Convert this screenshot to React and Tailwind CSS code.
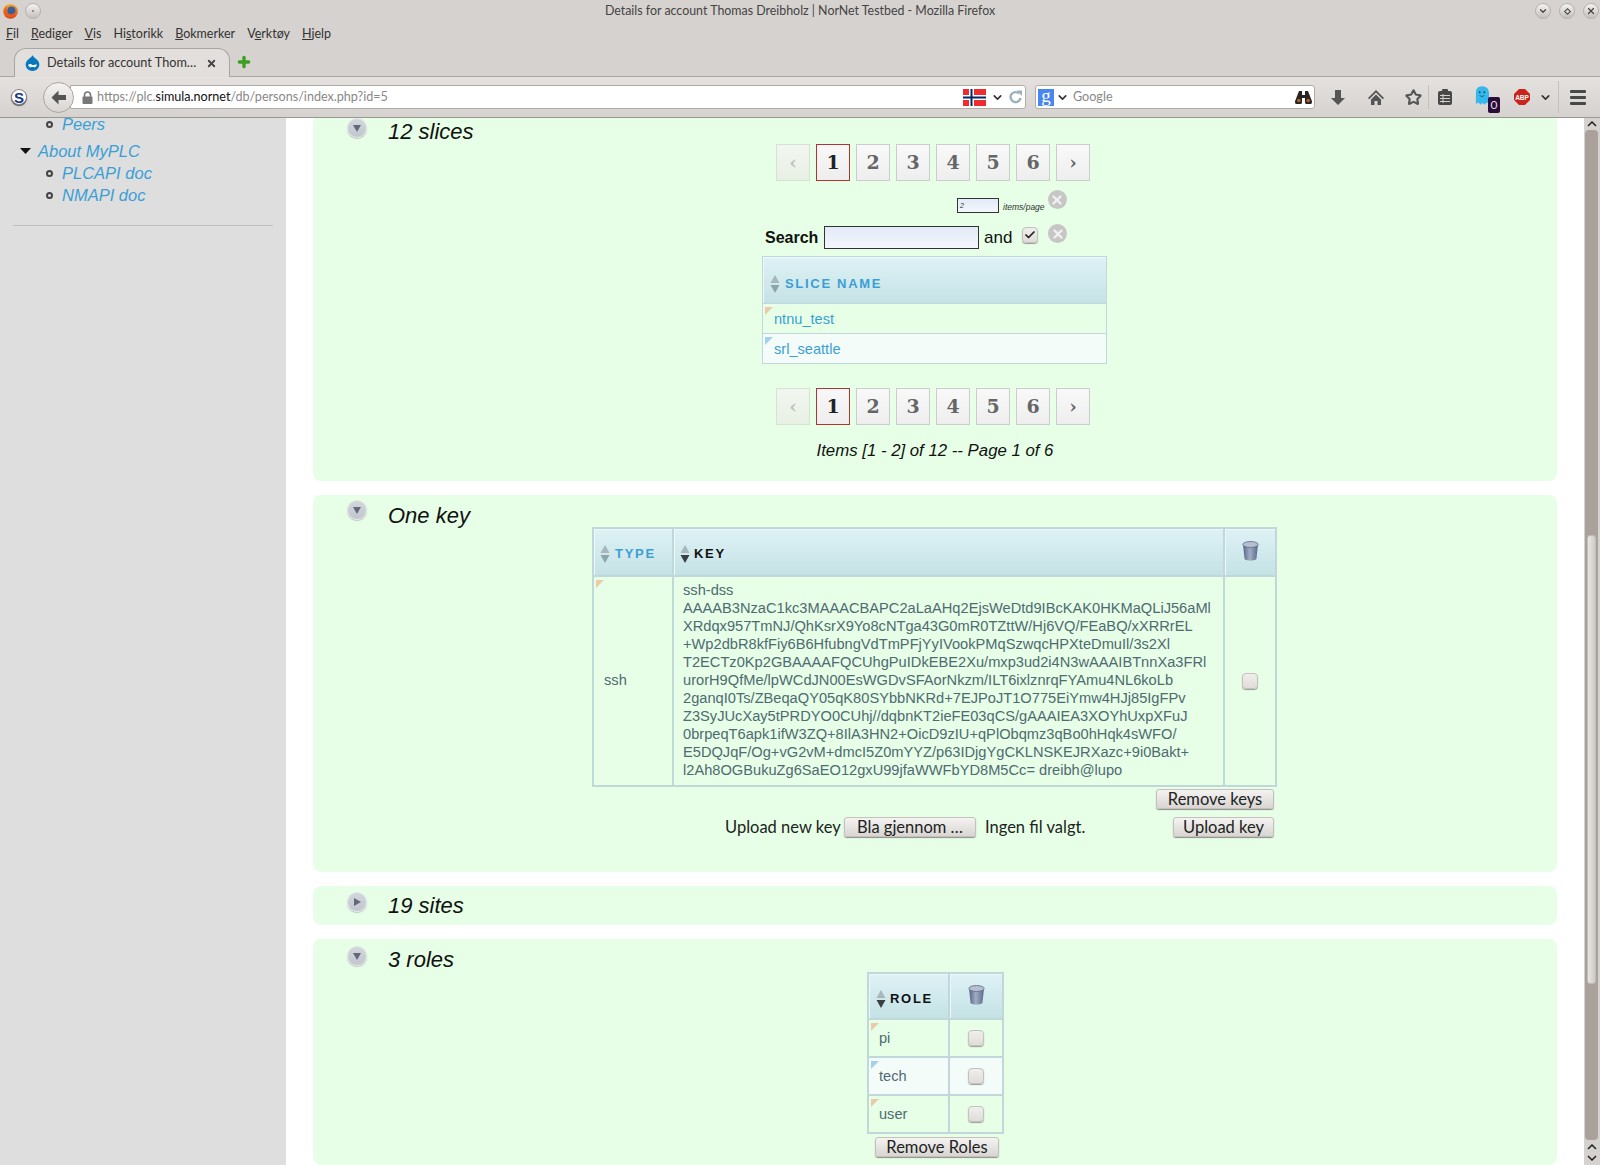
import React from 'react';
import { ChevronDown, Star, X, Plus, Check } from 'lucide-react';

const UI = "font-['Lato',sans-serif]";
const WEB = "font-['Liberation_Sans',sans-serif]";

function WinButton({ children }) {
  return (
    <span className="w-[16px] h-[16px] rounded-full bg-gradient-to-b from-[#f4f3f1] to-[#c4c0bc] border border-[#b5b1ad] flex items-center justify-center text-[#444]">
      {children}
    </span>
  );
}

function FirefoxLogo() {
  return (
    <svg width="15" height="15" viewBox="0 0 16 16">
      <defs>
        <linearGradient id="fx" x1="0" x2="0" y1="0" y2="1">
          <stop offset="0" stopColor="#f5a623" />
          <stop offset="1" stopColor="#d9421c" />
        </linearGradient>
      </defs>
      <circle cx="8" cy="8" r="7.800" fill="url(#fx)" />
      <circle cx="9" cy="7" r="4.300" fill="#35609c" />
      <path d="M4 2.500C2.800 6 4 10 7 11c2.500.8 5-.5 5.500-3 .8 3-1.500 6-5 6C4 14 1.500 11 1.800 7.500 2 5.500 3 3.500 4 2.500z" fill="#e8581f" />
    </svg>
  );
}

function DrupalDrop() {
  return (
    <svg width="15" height="16" viewBox="0 0 15 16">
      <path d="M7.500 0c.5 2 4 3.500 6 6.500 2 3.500.3 9.500-6 9.500S-.5 10 1.500 6.500C3.500 3.500 7 2 7.500 0z" fill="#0678be" />
      <path d="M3 10c2-1.500 3-.8 4.500 0s3-1.500 4.500 0c-1 2-2.500 3-4.500 3S4 12 3 10z" fill="#ffffff" />
      <path d="M5.500 12.500h4" stroke="#0678be" strokeWidth="1" />
    </svg>
  );
}

function LockIcon() {
  return (
    <svg width="11" height="13" viewBox="0 0 11 13">
      <path d="M2.500 6V4a3 3 0 0 1 6 0v2" fill="none" stroke="#777" strokeWidth="1.600" />
      <rect x="0.500" y="5.500" width="10" height="7.500" rx="1" fill="#777" />
    </svg>
  );
}

function BackArrow() {
  return (
    <svg width="15" height="15" viewBox="0 0 15 15">
      <path d="M7.500 0.500L0.500 7.500l7 7v-4.500H15V5H7.500z" fill="#555" />
    </svg>
  );
}

function ReloadIcon() {
  return (
    <svg width="13" height="14" viewBox="0 0 13 14">
      <path d="M10 3.500A5 5 0 1 0 11.500 8" fill="none" stroke="#9eb0bb" strokeWidth="2.400" />
      <path d="M7.500 0.500h5.500v5.500z" fill="#9eb0bb" />
    </svg>
  );
}

function NorwayFlag() {
  return (
    <svg width="23" height="17" viewBox="0 0 23 17">
      <rect width="23" height="17" fill="#ef2b2d" />
      <rect x="6" width="5" height="17" fill="#fff" />
      <rect y="6" width="23" height="5" fill="#fff" />
      <rect x="7.500" width="2" height="17" fill="#002868" />
      <rect y="7.500" width="23" height="2" fill="#002868" />
    </svg>
  );
}

function Binoculars() {
  return (
    <svg width="17" height="14" viewBox="0 0 17 14">
      <path d="M4 1h3v4h3V1h3l3.500 9a3.500 3.500 0 1 1-6.500 2V8H7v4a3.500 3.500 0 1 1-6.500-2z" fill="#2a2522" />
      <circle cx="3.800" cy="10.500" r="1.800" fill="#a8662e" />
      <circle cx="13.200" cy="10.500" r="1.800" fill="#a8662e" />
    </svg>
  );
}

function DownloadIcon() {
  return (
    <svg width="14" height="15" viewBox="0 0 14 15">
      <path d="M4 0h6v8h4l-7 7-7-7h4z" fill="#555" />
    </svg>
  );
}

function HomeIcon() {
  return (
    <svg width="16" height="15" viewBox="0 0 16 15">
      <path d="M8 0L0 8l1.200 1.200L8 2.500l6.800 6.700L16 8z" fill="#555" />
      <path d="M3 9.500l5-5 5 5V15H9.500v-4h-3v4H3z" fill="#555" />
    </svg>
  );
}

function ClipboardIcon() {
  return (
    <svg width="14" height="16" viewBox="0 0 14 16">
      <rect y="2" width="14" height="14" rx="2" fill="#484848" />
      <rect x="4" width="6" height="4" rx="1" fill="#484848" />
      <path d="M2 6.500h10M2 9.500h10M2 12.500h10M5 5v9" stroke="#d6d2cf" strokeWidth="1" />
    </svg>
  );
}

function AbpIcon() {
  return (
    <svg width="16" height="16" viewBox="0 0 16 16">
      <path d="M5 0h6l5 5v6l-5 5H5l-5-5V5z" fill="#c9231a" />
      <text x="8" y="10.500" textAnchor="middle" fontSize="6.500" fontWeight="700" fontFamily="Liberation Sans, sans-serif" fill="#fff">ABP</text>
    </svg>
  );
}

function Ghost() {
  return (
    <svg width="14" height="20" viewBox="0 0 15 21">
      <path d="M7.500 0C3 0 1 3 1 7v12l2.500-1.500L6 20l2-2 2.500 2 2-2.500L15 19V7c0-4-3-7-7.500-7z" fill="#35b8ec" />
      <circle cx="5" cy="6.500" r="1" fill="#104a66" />
      <circle cx="10" cy="6.500" r="1" fill="#104a66" />
      <path d="M5 10c1.500 1.200 3.500 1.200 5 0" fill="none" stroke="#104a66" strokeWidth=".8" />
    </svg>
  );
}

function TrashCan() {
  return (
    <svg width="17" height="20" viewBox="0 0 17 20">
      <defs>
        <linearGradient id="can" x1="0" x2="1" y1="0" y2="0">
          <stop offset="0" stopColor="#53648a" />
          <stop offset="0.45" stopColor="#a2adc2" />
          <stop offset="1" stopColor="#5a6a8e" />
        </linearGradient>
      </defs>
      <path d="M1 3.500l1.500 14c.1 1.500 3 2 6 2s5.900-.5 6-2l1.500-14z" fill="url(#can)" />
      <ellipse cx="8.500" cy="3.500" rx="7.700" ry="3" fill="#b7bfce" stroke="#5c6b8c" strokeWidth=".8" />
    </svg>
  );
}

function ToggleCircle({ dir = 'down' }) {
  return (
    <span className="w-[20px] h-[20px] rounded-full bg-gradient-to-b from-[#d3d7dd] to-[#c1c6cf] border border-[#e3e6e6] shadow-[0_1px_1px_#b8bfc0] flex items-center justify-center shrink-0">
      <svg width="10" height="10" viewBox="0 0 10 10">
        {dir === 'down'
          ? <path d="M1 2h8L5 9z" fill="#616a76" />
          : <path d="M2 1v8l7-4z" fill="#616a76" />}
      </svg>
    </span>
  );
}

function CloseCircle() {
  return (
    <span className="w-[19px] h-[19px] rounded-full bg-[#c6c6c6] flex items-center justify-center">
      <X size={14} strokeWidth={4} color="#f1f1f1" />
    </span>
  );
}

function Checkbox({ checked }) {
  return (
    <span className="inline-flex w-[16px] h-[16px] rounded-[4px] bg-gradient-to-b from-[#f1efed] to-[#dfdcd9] border border-[#c4c1bd] shadow-[0_1px_1px_#9c9a97] items-center justify-center align-middle">
      {checked && <Check size={12} strokeWidth={3.5} color="#222" />}
    </span>
  );
}

function FormButton({ children, w }) {
  return (
    <span className={`${UI} ${w} inline-flex justify-center items-center h-[20px] rounded-[3px] bg-gradient-to-b from-[#f5f4f2] to-[#d8d5d2] border border-[#c4c1bd] shadow-[0_1px_1px_#8f8d8a] text-[16.5px] text-[#222] leading-none`}>
      {children}
    </span>
  );
}

function Pager({ className = '' }) {
  const pages = ['‹', '1', '2', '3', '4', '5', '6', '›'];
  return (
    <div className={`flex justify-center gap-[6px] pr-[4px] font-['DejaVu_Serif',serif] font-bold ${className}`}>
      {pages.map((p, i) => (
        <span
          key={i}
          className={`w-[34px] h-[37px] border flex items-center justify-center text-[19px] bg-gradient-to-b ${
            i === 1
              ? 'border-[#b03434] text-[#222] from-[#f8f8f8] to-[#eeeeee]'
              : i === 0
                ? 'border-[#d4e4d0] text-[#b8c4b8] from-[#f2f6f0] to-[#e8f0e4]'
                : 'border-[#cccccc] text-[#666666] from-[#f9f9f9] to-[#eeeeee]'
          }`}
        >
          {p}
        </span>
      ))}
    </div>
  );
}

function Corner({ color }) {
  return (
    <svg width="8" height="8" viewBox="0 0 8 8" className="absolute left-[2px] top-[3px]">
      <path d="M0 0h8L0 8z" fill={color} />
    </svg>
  );
}

function SortIcon({ active }) {
  return (
    <svg width="10" height="18" viewBox="0 0 10 18" className="shrink-0">
      <path d="M5 0l4.500 8H.500z" fill="#a8b7bb" />
      <path d="M.500 10h9L5 18z" fill={active ? '#3a3f44' : '#8fa3aa'} />
    </svg>
  );
}

function HeadCell({ children, h = 'h-[46px]', line = 'border-2' }) {
  return (
    <th className={`${h} ${line} p-0 border-[#c0d8da] border-b-0 bg-gradient-to-b from-[#dff2f6] to-[#c4e2e5] shadow-[inset_1px_1px_0_#eef8fa]`}>
      {children}
    </th>
  );
}

function SortHead({ label, active, pad = 'pl-[6px]', top = 'pt-[4px]', gap = 'gap-[4px]' }) {
  return (
    <div className={`flex items-center ${gap} ${pad} ${top} ${WEB} text-[13px] font-bold tracking-[1.7px] ${active ? 'text-[#111111]' : 'text-[#3b9fd6]'}`}>
      <SortIcon active={active} />
      <span>{label}</span>
    </div>
  );
}

function Panel({ title, dir = 'down', children, className = '', toggle = 'pt-0', heading = 'pt-0' }) {
  return (
    <section className={`bg-[#e6ffe6] rounded-[8px] ${className}`}>
      <div className="flex pl-[34px]">
        <span className={toggle}><ToggleCircle dir={dir} /></span>
        <h2 className={`${WEB} ${heading} ml-[21px] italic text-[22px] leading-[25px] text-[#111111]`}>{title}</h2>
      </div>
      {children}
    </section>
  );
}

const KEY_LINES = [
  'ssh-dss',
  'AAAAB3NzaC1kc3MAAACBAPC2aLaAHq2EjsWeDtd9IBcKAK0HKMaQLiJ56aMl',
  'XRdqx957TmNJ/QhKsrX9Yo8cNTga43G0mR0TZttW/Hj6VQ/FEaBQ/xXRRrEL',
  '+Wp2dbR8kfFiy6B6HfubngVdTmPFjYyIVookPMqSzwqcHPXteDmuIl/3s2Xl',
  'T2ECTz0Kp2GBAAAAFQCUhgPuIDkEBE2Xu/mxp3ud2i4N3wAAAIBTnnXa3FRl',
  'urorH9QfMe/lpWCdJN00EsWGDvSFAorNkzm/ILT6ixlznrqFYAmu4NL6koLb',
  '2ganqI0Ts/ZBeqaQY05qK80SYbbNKRd+7EJPoJT1O775EiYmw4HJj85IgFPv',
  'Z3SyJUcXay5tPRDYO0CUhj//dqbnKT2ieFE03qCS/gAAAIEA3XOYhUxpXFuJ',
  '0brpeqT6apk1ifW3ZQ+8IlA3HN2+OicD9zIU+qPlObqmz3qBo0hHqk4sWFO/',
  'E5DQJqF/Og+vG2vM+dmcI5Z0mYYZ/p63IDjgYgCKLNSKEJRXazc+9i0Bakt+',
  'l2Ah8OGBukuZg6SaEO12gxU99jfaWWFbYD8M5Cc= dreibh@lupo',
];

function MenuBar() {
  return (
    <div className={`${UI} h-[24px] flex items-center pl-[6px] gap-[12px] text-[12.5px] text-[#333]`}>
      <span><u>F</u>il</span>
      <span><u>R</u>ediger</span>
      <span><u>V</u>is</span>
      <span>Hi<u>s</u>torikk</span>
      <span><u>B</u>okmerker</span>
      <span>V<u>e</u>rktøy</span>
      <span><u>H</u>jelp</span>
    </div>
  );
}

function BrowserChrome() {
  return (
    <header className={`${UI} h-[118px] bg-[#d6d2cf] border-b border-[#9b9894] flex flex-col`}>
      <div className="h-[22px] relative flex items-center justify-between pl-[3px]">
        <div className="flex items-center gap-[7px]">
          <FirefoxLogo />
          <WinButton><span className="w-[2px] h-[2px] bg-[#777] rounded-full" /></WinButton>
        </div>
        <div className="absolute inset-x-0 top-[2px] text-center text-[12.4px] text-[#444]">
          Details for account Thomas Dreibholz | NorNet Testbed - Mozilla Firefox
        </div>
        <div className="flex items-center gap-[8px] pr-[1px]">
          <WinButton><ChevronDown size={10} strokeWidth={3} /></WinButton>
          <WinButton><span className="w-[5px] h-[5px] rotate-45 border border-[#444]" /></WinButton>
          <WinButton><X size={10} strokeWidth={3} /></WinButton>
        </div>
      </div>
      <MenuBar />
      <div className="h-[30px] flex items-end pl-[14px] relative">
        <div className="w-[216px] h-[29px] -mb-[1px] relative z-10 rounded-t-[12px] bg-[#e2dfdc] border border-b-0 border-[#a9a6a2] flex items-center pl-[10px] pr-[12px] gap-[7px] text-[12.7px] text-[#333]">
          <DrupalDrop />
          <span className="flex-1 whitespace-nowrap">Details for account Thom…</span>
          <X size={11} strokeWidth={4} color="#444" />
        </div>
        <span className="ml-[6px] mb-[6px]"><Plus size={16} strokeWidth={5} color="#3d9e20" /></span>
      </div>
      <div className="flex-1 border-t border-[#a9a6a2] bg-gradient-to-b from-[#e4e1df] to-[#d6d2cf] flex items-center pl-[11px]">
        <span className={`${WEB} w-[16px] h-[16px] rounded-full bg-white border border-[#888] shadow-[0_1px_1px_#555] flex items-center justify-center mr-[16px] font-bold text-[15px] leading-none text-[#14398a]`}>S</span>
        <div className="relative z-10 w-[31px] h-[31px] -mr-[4px] rounded-full bg-gradient-to-b from-[#f4f3f1] to-[#d8d5d2] border border-[#a9a6a2] flex items-center justify-center">
          <BackArrow />
        </div>
        <div className="w-[956px] h-[24px] bg-white border border-[#b0ada9] rounded-r-[3px] flex items-center pl-[11px] pr-[3px] text-[12.6px] text-[#888]">
          <span className="mr-[4px]"><LockIcon /></span>
          <span className="pt-[1px]">https://plc.<span className="text-[#111]">simula.nornet</span>/db/persons/index.php?id=5</span>
          <span className="ml-auto flex items-center gap-[5px]">
            <NorwayFlag />
            <ChevronDown size={13} strokeWidth={3} color="#333" />
            <ReloadIcon />
          </span>
        </div>
        <div className="w-[280px] h-[24px] ml-[9px] bg-white border border-[#b0ada9] rounded-[3px] flex items-center pl-[2px] pr-[2px] text-[12.6px] text-[#888]">
          <span className="font-['Liberation_Serif',serif] w-[16px] h-[17px] bg-[#4a86f0] text-white text-[19px] leading-[14px] text-center">g</span>
          <ChevronDown size={13} strokeWidth={3} color="#333" className="mx-[2px]" />
          <span className="ml-[2px] pt-[1px]">Google</span>
          <span className="ml-auto"><Binoculars /></span>
        </div>
        <div className="flex-1 flex items-center text-[#555]">
          <span className="ml-[16px]"><DownloadIcon /></span>
          <span className="ml-[23px]"><HomeIcon /></span>
          <Star size={17} strokeWidth={3} className="ml-[21px]" />
          <span className="w-px h-[24px] bg-[#c4c1bd] ml-[6px]" />
          <span className="ml-[9px]"><ClipboardIcon /></span>
          <span className="relative ml-[23px] h-[20px] -mt-[2px]">
            <Ghost />
            <span className="absolute left-[13px] top-[11px] w-[12px] h-[16px] rounded-[2px] bg-[#2c0b3c] text-[#ddd] text-[12px] leading-[16px] text-center">0</span>
          </span>
          <span className="ml-[25px] flex"><AbpIcon /></span>
          <ChevronDown size={13} strokeWidth={3} color="#333" className="ml-[9px]" />
          <span className="w-px h-[32px] bg-[#c4c1bd] ml-[6px]" />
          <span className="ml-[11px] flex flex-col gap-[3px]">
            <span className="w-[16px] h-[3px] rounded-[1px] bg-[#484848]" />
            <span className="w-[16px] h-[3px] rounded-[1px] bg-[#484848]" />
            <span className="w-[16px] h-[3px] rounded-[1px] bg-[#484848]" />
          </span>
        </div>
      </div>
    </header>
  );
}

function Sidebar() {
  const link = 'text-[#3b9fd6] italic text-[16.5px] leading-[22px] whitespace-nowrap';
  const sub = 'flex items-center gap-[9px] pl-[46px] h-[22px]';
  const bullet = 'w-[7px] h-[7px] rounded-full border-2 border-[#444] bg-[#dedede]';
  return (
    <aside className={`${WEB} w-[286px] shrink-0 bg-[#dedede]`}>
      <div className="flex items-center gap-[9px] pl-[46px] h-[12px]"><span className={bullet} /><span className={link}>Peers</span></div>
      <div className="flex items-center gap-[7px] pl-[20px] mt-[10px] h-[22px]">
        <svg width="11" height="6" viewBox="0 0 11 6"><path d="M0 0h11L5.500 6z" fill="#111" /></svg>
        <span className={link}>About MyPLC</span>
      </div>
      <div className={sub}><span className={bullet} /><span className={link}>PLCAPI doc</span></div>
      <div className={sub}><span className={bullet} /><span className={link}>NMAPI doc</span></div>
      <div className="ml-[13px] w-[260px] h-px bg-[#bdbdbd] mt-[19px]" />
    </aside>
  );
}

function Scrollbar() {
  return (
    <div className="w-[16px] shrink-0 bg-[#d6d2cf] flex flex-col ml-[27px] pl-[1px] pr-[2px]">
      <div className="h-[12px] flex items-center justify-center">
        <svg width="10" height="6" viewBox="0 0 10 6"><path d="M1 5l4-4 4 4" fill="none" stroke="#222" strokeWidth="1.500" /></svg>
      </div>
      <div className="flex-1 rounded-[4px] bg-[#aaa19d] px-[2px] overflow-hidden">
        <div className="mt-[405px] h-[449px] rounded-[3px] bg-gradient-to-r from-[#e8e6e3] to-[#cfcbc7] border border-[#c0bcb8]" />
      </div>
      <div className="h-[25px] flex flex-col items-center justify-center gap-[5px]">
        <svg width="10" height="6" viewBox="0 0 10 6"><path d="M1 5l4-4 4 4" fill="none" stroke="#222" strokeWidth="1.500" /></svg>
        <svg width="10" height="6" viewBox="0 0 10 6"><path d="M1 1l4 4 4-4" fill="none" stroke="#222" strokeWidth="1.500" /></svg>
      </div>
    </div>
  );
}

export default function App() {
  return (
    <div className="w-[1600px] h-[1165px] overflow-hidden bg-white flex flex-col">
      <BrowserChrome />
      <div className="flex flex-1 min-h-0">
        <Sidebar />
        <main className={`${WEB} w-[1244px] ml-[27px] flex flex-col gap-[14px] overflow-hidden shrink-0 text-[#111]`}>
          <Panel title="12 slices" heading="pt-[1px]" className="h-[363px] shrink-0 rounded-t-none">
            <Pager />
            <div className="flex mt-[9px] h-[22px] items-start">
              <span className="ml-[644px] mt-[8px] w-[42px] h-[15px] border border-[#333] bg-gradient-to-b from-[#e2eaf8] to-[#f4f7fc] italic text-[7px] leading-[13px] pl-[2px] text-[#333]">2</span>
              <span className="ml-[4px] mt-[12px] italic text-[8.5px] leading-[10px] text-[#333]">items/page</span>
              <span className="ml-[3px]"><CloseCircle /></span>
            </div>
            <div className="flex items-start h-[24px] mt-[14px]">
              <span className="ml-[452px] mt-[2px] font-bold text-[16px] leading-[20px] w-[59px]">Search</span>
              <span className="w-[155px] h-[23px] border border-[#333] bg-gradient-to-b from-[#e2eaf8] to-[#f4f7fc]" />
              <span className="ml-[5px] mt-[2px] text-[17px] leading-[20px] w-[38px]">and</span>
              <span className="leading-none"><Checkbox checked /></span>
              <span className="ml-[10px] -mt-[2px]"><CloseCircle /></span>
            </div>
            <table className="ml-[449px] mt-[6px] w-[345px] border-collapse table-fixed text-[14.6px] leading-[18px]">
              <tbody>
                <tr>
                  <HeadCell h="h-[47px]" line="border"><SortHead label="SLICE NAME" pad="pl-[7px]" top="pt-[8px]" gap="gap-[5px]" /></HeadCell>
                </tr>
                <tr>
                  <td className="relative h-[30px] pl-[11px] border border-[#c0d8da] text-[#3b9fd6]"><Corner color="#ecc9a8" />ntnu_test</td>
                </tr>
                <tr>
                  <td className="relative h-[30px] pl-[11px] border border-[#c0d8da] bg-[#f4fcfa] text-[#3b9fd6]"><Corner color="#a4d0ee" />srl_seattle</td>
                </tr>
              </tbody>
            </table>
            <Pager className="mt-[24px]" />
            <p className="text-center italic text-[16.8px] leading-[20px] mt-[16px]">Items [1 - 2] of 12 -- Page 1 of 6</p>
          </Panel>

          <Panel title="One key" toggle="-mt-[3px]" className="h-[377px] shrink-0 pt-[8px]">
            <table className="ml-[279px] -mt-[1px] w-[683px] border-collapse table-fixed text-[14.65px] leading-[18px] text-[#4f6a72]">
              <colgroup>
                <col className="w-[80px]" />
                <col className="w-[551px]" />
                <col className="w-[52px]" />
              </colgroup>
              <tbody>
                <tr>
                  <HeadCell h="h-[48px]"><SortHead label="TYPE" gap="gap-[5px]" /></HeadCell>
                  <HeadCell h="h-[48px]"><SortHead label="KEY" active /></HeadCell>
                  <HeadCell h="h-[48px]"><span className="flex justify-center -mt-[3px]"><TrashCan /></span></HeadCell>
                </tr>
                <tr>
                  <td className="relative pl-[10px] pb-[2px] border-2 border-[#c0d8da]"><Corner color="#ecc9a8" />ssh</td>
                  <td className="pl-[9px] pt-[4px] pb-[6px] border-2 border-[#c0d8da] whitespace-nowrap">
                    {KEY_LINES.map((l) => <div key={l}>{l}</div>)}
                  </td>
                  <td className="text-center pb-[3px] border-2 border-[#c0d8da]"><Checkbox /></td>
                </tr>
              </tbody>
            </table>
            <div className="flex justify-end pr-[283px] mt-[2px]"><FormButton w="w-[118px]">Remove keys</FormButton></div>
            <div className={`${UI} flex items-center mt-[8px] h-[20px] text-[16.5px] text-[#222]`}>
              <span className="ml-[412px] w-[119px] whitespace-nowrap">Upload new key</span>
              <FormButton w="w-[132px]">Bla gjennom …</FormButton>
              <span className="ml-[9px] w-[188px] whitespace-nowrap">Ingen fil valgt.</span>
              <FormButton w="w-[101px]">Upload key</FormButton>
            </div>
          </Panel>

          <Panel title="19 sites" dir="right" heading="pt-[1px]" className="h-[39px] shrink-0 pt-[6px]" />

          <Panel title="3 roles" heading="pt-[1px]" className="flex-1 pt-[7px]">
            <table className="ml-[554px] w-[135px] border-collapse table-fixed text-[14.6px] leading-[18px] text-[#4f6a72]">
              <colgroup>
                <col className="w-[81px]" />
                <col className="w-[54px]" />
              </colgroup>
              <tbody>
                <tr>
                  <HeadCell><SortHead label="ROLE" active pad="pl-[7px]" top="pt-[6px]" /></HeadCell>
                  <HeadCell><span className="flex justify-center -mt-[3px]"><TrashCan /></span></HeadCell>
                </tr>
                {[['pi', '#ecc9a8', ''], ['tech', '#a4d0ee', 'bg-[#f4fcfa]'], ['user', '#ecc9a8', '']].map(([r, c, bg]) => (
                  <tr key={r} className={bg}>
                    <td className="relative h-[38px] pl-[10px] border-2 border-[#c0d8da]"><Corner color={c} />{r}</td>
                    <td className="text-center pb-[2px] border-2 border-[#c0d8da]"><Checkbox /></td>
                  </tr>
                ))}
              </tbody>
            </table>
            <div className="flex mt-[3px] ml-[562px]"><FormButton w="w-[124px]">Remove Roles</FormButton></div>
          </Panel>
        </main>
        <Scrollbar />
      </div>
    </div>
  );
}
